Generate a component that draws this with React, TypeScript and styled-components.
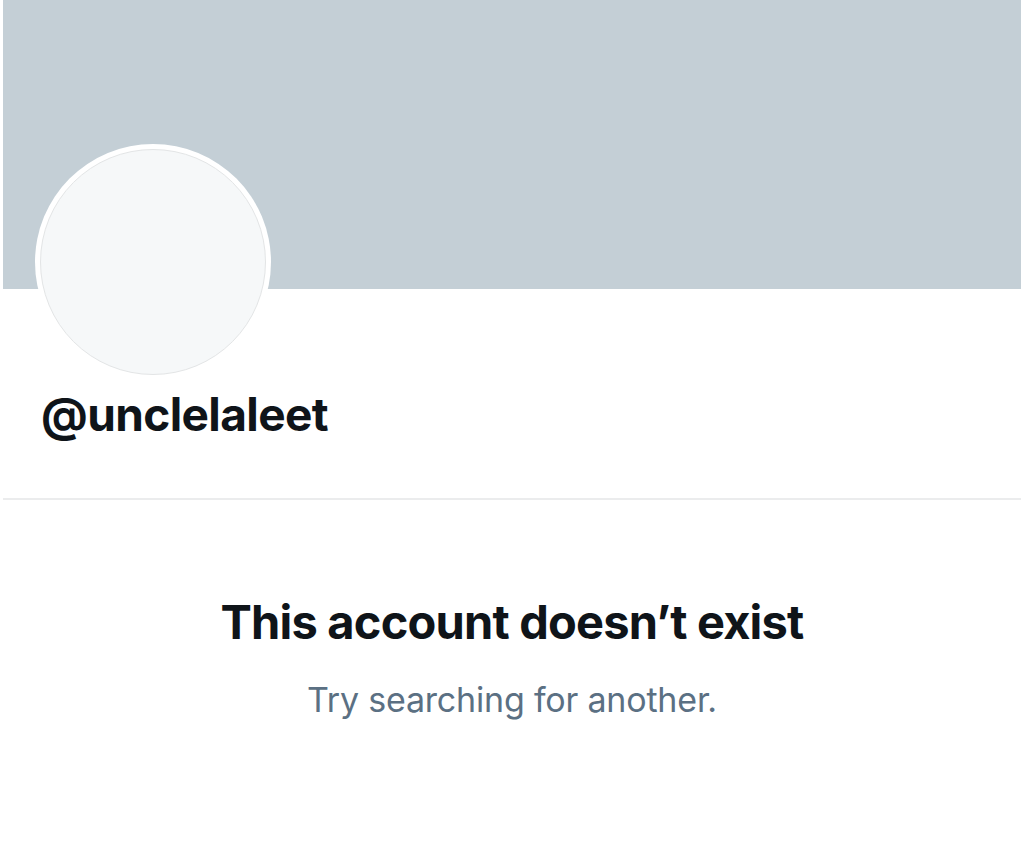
import React from "react";
import styled, { createGlobalStyle } from "styled-components";

const Global = createGlobalStyle`
  html, body { margin: 0; padding: 0; background: #ffffff; }
  body { font-family: Inter, "Liberation Sans", Arial, sans-serif; }
`;

const Page = styled.div`
  width: 1024px;
  height: 845px;
  padding: 0 3px;
  box-sizing: border-box;
  background: #ffffff;
  display: flex;
  flex-direction: column;
  overflow: hidden;
`;

const Banner = styled.div`
  height: 289px;
  background: #c4cfd6;
  flex-shrink: 0;
`;

const Header = styled.div`
  display: flex;
  flex-direction: column;
  align-items: flex-start;
  padding-left: 32px;
  height: 209px;
  box-sizing: border-box;
`;

const Avatar = styled.div`
  width: 236px;
  height: 236px;
  margin-top: -145px;
  border-radius: 50%;
  background: #ffffff;
  padding: 5px;
  box-sizing: border-box;
  flex-shrink: 0;
`;

const AvatarInner = styled.div`
  width: 100%;
  height: 100%;
  border-radius: 50%;
  background: #f6f8f9;
  border: 1.5px solid #e3e5e6;
  box-sizing: border-box;
`;

const Handle = styled.div`
  margin-top: 4px;
  margin-left: 6px;
  font-size: 46px;
  font-weight: 700;
  line-height: 60px;
  color: #0f1419;
  letter-spacing: -0.6px;
`;

const Divider = styled.div`
  height: 2px;
  background: #ebeced;
  flex-shrink: 0;
`;

const Empty = styled.div`
  display: flex;
  flex-direction: column;
  align-items: center;
  padding-top: 92px;
`;

const Title = styled.div`
  font-size: 47px;
  font-weight: 700;
  line-height: 60px;
  color: #0f1419;
  letter-spacing: -0.8px;
`;

const Subtitle = styled.div`
  margin-top: 28px;
  font-size: 34px;
  font-weight: 400;
  line-height: 40px;
  color: #5b7083;
  letter-spacing: -0.2px;
`;

export default function App() {
  return (
    <>
      <Global />
      <Page>
        <Banner />
        <Header>
          <Avatar>
            <AvatarInner />
          </Avatar>
          <Handle>@unclelaleet</Handle>
        </Header>
        <Divider />
        <Empty>
          <Title>This account doesn’t exist</Title>
          <Subtitle>Try searching for another.</Subtitle>
        </Empty>
      </Page>
    </>
  );
}
